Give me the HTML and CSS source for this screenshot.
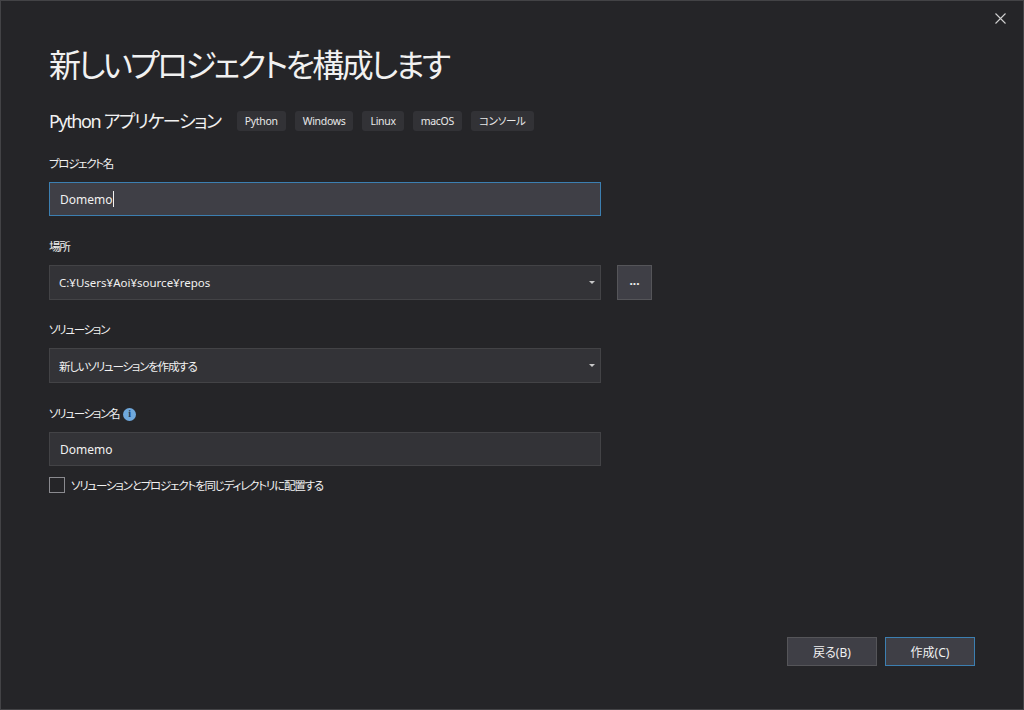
FILE: index.html
```html
<!DOCTYPE html>
<html lang="ja">
<head>
    <meta charset="UTF-8">
    <title>新しいプロジェクトを構成します</title>
<link rel="stylesheet" href="styles.css">
</head>
<body>
<div class="window">
    <div class="titlebar">
        <span class="close">
            <svg width="11" height="11" viewBox="0 0 11 11"><path d="M0.5 0.5 L10.5 10.5 M10.5 0.5 L0.5 10.5" stroke="#d0d0d0" stroke-width="1.1"/></svg>
        </span>
    </div>
    <div class="content">
        <h1>新しいプロジェクトを構成します</h1>
        <div class="template">
            <h2>Python アプリケーション</h2>
            <div class="tags">
                <span class="tag">Python</span>
                <span class="tag">Windows</span>
                <span class="tag">Linux</span>
                <span class="tag">macOS</span>
                <span class="tag">コンソール</span>
            </div>
        </div>

        <div class="field">
            <label>プロジェクト名</label>
            <div class="input focused">Domemo<span class="caret"></span></div>
        </div>

        <div class="field">
            <label>場所</label>
            <div class="row">
                <div class="input select">C:¥Users¥Aoi¥source¥repos<span class="arrow"></span></div>
                <div class="browse">...</div>
            </div>
        </div>

        <div class="field solution">
            <label>ソリューション</label>
            <div class="input select jp">新しいソリューションを作成する<span class="arrow"></span></div>
        </div>

        <div class="field">
            <label>ソリューション名 <span class="info">i</span></label>
            <div class="input">Domemo</div>
        </div>

        <div class="check">
            <span class="box"></span>
            <span class="jp">ソリューションとプロジェクトを同じディレクトリに配置する</span>
        </div>
    </div>
    <div class="footer">
        <div class="btn">戻る(B)</div>
        <div class="btn primary">作成(C)</div>
    </div>
</div>
</body>
</html>
```

FILE: styles.css
```css
html, body{
    margin: 0;
    padding: 0;
}
body{
    background-color: #252528;
    font-family: "Noto Sans", "Noto Sans CJK JP", sans-serif;
    font-feature-settings: "palt";
    color: #f1f1f1;
}
.window{
    box-sizing: border-box;
    width: 1024px;
    height: 710px;
    border: 1px solid #434346;
    display: flex;
    flex-direction: column;
}
.titlebar{
    display: flex;
    justify-content: flex-end;
    height: 32px;
    padding: 12px 17px 0 0;
    box-sizing: border-box;
}
.close{
    display: flex;
    width: 11px;
    height: 11px;
}
.content{
    padding-left: 48px;
    display: flex;
    flex-direction: column;
}
h1{
    margin: 10px 0 0 0;
    font-size: 32px;
    font-weight: 400;
    line-height: 44px;
    letter-spacing: -2.7px;
}
.template{
    display: flex;
    align-items: center;
    margin-top: 22px;
}
h2{
    margin: 0;
    font-size: 18px;
    font-weight: 400;
    line-height: 24px;
    letter-spacing: -1.4px;
}
.tags{
    display: flex;
    gap: 9px;
    margin-left: 16px;
}
.tag{
    background-color: #323236;
    border-radius: 3px;
    font-size: 10.5px;
    line-height: 20px;
    padding: 0 8px;
    color: #e8e8e8;
    letter-spacing: -0.3px;
}
.field{
    display: flex;
    flex-direction: column;
    margin-top: 23px;
}
.field.solution{
    margin-top: 22px;
}
.field label{
    font-size: 11.5px;
    line-height: 16px;
    margin-bottom: 10px;
    display: flex;
    align-items: center;
    letter-spacing: -1.3px;
}
.info{
    display: inline-flex;
    width: 13px;
    height: 13px;
    margin-left: 4px;
    border-radius: 50%;
    background-color: #6fa8dc;
    color: #1e3c5a;
    font-size: 10px;
    font-weight: 700;
    justify-content: center;
    align-items: center;
    line-height: 1;
    letter-spacing: 0;
    font-family: "Liberation Serif", serif;
}
.row{
    display: flex;
    gap: 16px;
}
.input{
    box-sizing: border-box;
    width: 552px;
    height: 34px;
    background-color: #333337;
    border: 1px solid #434346;
    font-size: 12px;
    padding: 0 10px;
    display: flex;
    align-items: center;
    position: relative;
}
.input.focused{
    background-color: #3f3f46;
    border-color: #3c7fb1;
}
.select{
    height: 35px;
    padding-left: 9px;
    font-size: 11.5px;
}
.jp{
    letter-spacing: -1.2px;
}
.caret{
    display: inline-block;
    width: 1px;
    height: 16px;
    background-color: #f1f1f1;
}
.arrow{
    position: absolute;
    right: 5px;
    top: 15px;
    border-left: 3px solid transparent;
    border-right: 3px solid transparent;
    border-top: 3px solid #c8c8c8;
}
.browse{
    box-sizing: border-box;
    width: 35px;
    height: 35px;
    background-color: #3f3f46;
    border: 1px solid #555559;
    display: flex;
    justify-content: center;
    align-items: center;
    font-size: 12px;
    font-weight: 700;
    padding-bottom: 4px;
}
.check{
    display: flex;
    align-items: center;
    gap: 6px;
    margin-top: 11px;
    font-size: 11.5px;
}
.box{
    box-sizing: border-box;
    width: 16px;
    height: 16px;
    border: 1px solid #8a8a8f;
    background-color: #252528;
}
.footer{
    margin-top: auto;
    display: flex;
    justify-content: flex-end;
    gap: 8px;
    padding: 0 48px 43px 0;
}
.btn{
    box-sizing: border-box;
    width: 90px;
    height: 29px;
    background-color: #3f3f46;
    border: 1px solid #555559;
    display: flex;
    justify-content: center;
    align-items: center;
    font-size: 12px;
}
.btn.primary{
    border-color: #3c7fb1;
}
```
